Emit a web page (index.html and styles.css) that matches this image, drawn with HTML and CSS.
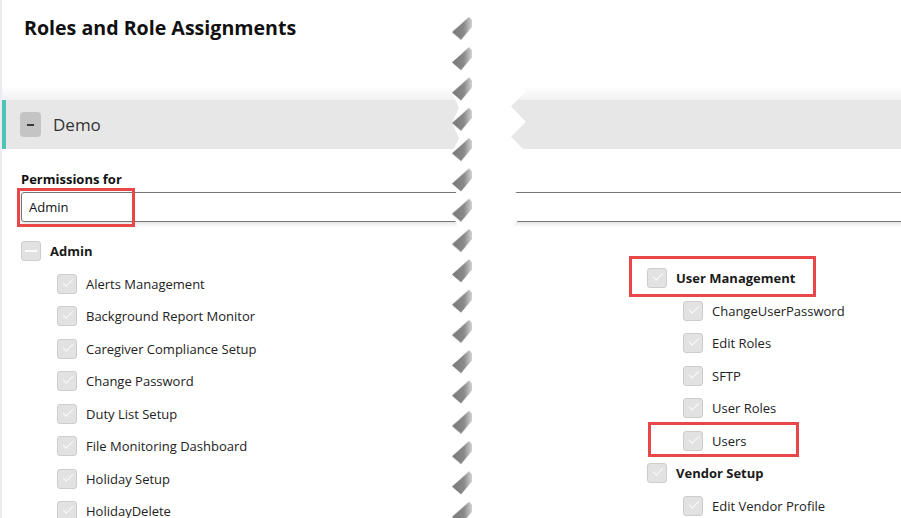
FILE: index.html
```html
<!DOCTYPE html>
<html lang="en">
<head>
    <meta charset="UTF-8">
    <meta name="viewport" content="width=device-width, initial-scale=1.0">
    <title>Roles and Role Assignments</title>
    <link rel="stylesheet" href="styles.css">
</head>
<body>
<div class="stage">

    <!-- left half of the torn capture -->
    <div class="tear-left">
        <div class="piece piece-left">
            <header class="page-head">
                <h1>Roles and Role Assignments</h1>
            </header>
            <div class="head-shade"></div>

            <div class="group-band">
                <span class="collapse-btn" aria-label="Collapse"></span>
                <span class="group-name">Demo</span>
            </div>

            <div class="perm-select">
                <label class="perm-label">Permissions for</label>
                <div class="select-box">Admin</div>
                <span class="mark mark-select"></span>
            </div>

            <ul class="perm-tree">
                <li class="perm-row"><span class="tick tick-partial"></span><b>Admin</b></li>
                <li class="perm-row child"><span class="tick"></span>Alerts Management</li>
                <li class="perm-row child"><span class="tick"></span>Background Report Monitor</li>
                <li class="perm-row child"><span class="tick"></span>Caregiver Compliance Setup</li>
                <li class="perm-row child"><span class="tick"></span>Change Password</li>
                <li class="perm-row child"><span class="tick"></span>Duty List Setup</li>
                <li class="perm-row child"><span class="tick"></span>File Monitoring Dashboard</li>
                <li class="perm-row child"><span class="tick"></span>Holiday Setup</li>
                <li class="perm-row child"><span class="tick"></span>HolidayDelete</li>
            </ul>
        </div>

        <!-- shadow teeth along the torn edge -->
        <svg class="tear-teeth" width="26" height="518" viewBox="0 0 26 518" aria-hidden="true">
            <defs>
                <linearGradient id="toothFade" x1="0" y1="0" x2="1" y2="0">
                    <stop offset="0" stop-color="#777"/>
                    <stop offset="0.6" stop-color="#8a8a8a"/>
                    <stop offset="1" stop-color="#d2d2d2"/>
                </linearGradient>
                <pattern id="teeth" patternUnits="userSpaceOnUse" x="0" y="15" width="26" height="30.3">
                    <polygon points="2,17 19,2 22,5 22,12 11,25" fill="url(#toothFade)"/>
                </pattern>
                <filter id="soft" x="-20%" y="-5%" width="140%" height="110%">
                    <feGaussianBlur stdDeviation="0.6"/>
                </filter>
            </defs>
            <rect x="0" y="14" width="26" height="504" fill="url(#teeth)" filter="url(#soft)"/>
        </svg>
    </div>

    <!-- right half of the torn capture -->
    <div class="piece piece-right">
        <div class="page-head"></div>
        <div class="head-shade"></div>
        <div class="group-band"></div>

        <div class="perm-select perm-select-cont">
            <div class="select-box"></div>
        </div>

        <ul class="perm-tree perm-tree-cont">
            <li class="perm-row mark-um"><span class="tick"></span><b>User Management</b></li>
            <li class="perm-row child"><span class="tick"></span>ChangeUserPassword</li>
            <li class="perm-row child"><span class="tick"></span>Edit Roles</li>
            <li class="perm-row child"><span class="tick"></span>SFTP</li>
            <li class="perm-row child"><span class="tick"></span>User Roles</li>
            <li class="perm-row child mark-users"><span class="tick"></span>Users</li>
            <li class="perm-row"><span class="tick"></span><b>Vendor Setup</b></li>
            <li class="perm-row child"><span class="tick"></span>Edit Vendor Profile</li>
        </ul>
    </div>

</div>
</body>
</html>
```

FILE: styles.css
```css
/* Page reset */
html, body {
    margin: 0;
    padding: 0;
    background: #fff;
}

body {
    font-family: "Open Sans", "Noto Sans", sans-serif;
    color: #222;
    width: 901px;
    height: 518px;
    overflow: hidden;
}

.stage {
    display: flex;
    height: 518px;
}

/* Torn pieces */
.tear-left {
    position: relative;
    flex: none;
    width: 474px;
    height: 518px;
}

.piece {
    height: 518px;
    overflow: hidden;
    background: #fff;
}

.piece-left {
    width: 459px;
    border-left: 2px solid #ebebf1;
    box-sizing: border-box;
    clip-path: polygon(0 0, 459px 0, 452px 1.7px, 459px 16.85px, 452px 32px, 459px 47.15px, 452px 62.3px, 459px 77.45px, 452px 92.6px, 459px 107.75px, 452px 122.9px, 459px 138.05px, 452px 153.2px, 459px 168.35px, 452px 183.5px, 459px 198.65px, 452px 213.8px, 459px 228.95px, 452px 244.1px, 459px 259.25px, 452px 274.4px, 459px 289.55px, 452px 304.7px, 459px 319.85px, 452px 335px, 459px 350.15px, 452px 365.3px, 459px 380.45px, 452px 395.6px, 459px 410.75px, 452px 425.9px, 459px 441.05px, 452px 456.2px, 459px 471.35px, 452px 486.5px, 459px 501.65px, 452px 516.8px, 459px 531.95px, 0 531.95px);
}

.tear-teeth {
    position: absolute;
    top: 0;
    left: 450px;
    display: block;
}

.piece-right {
    flex: none;
    width: 390px;
    margin-left: 37px;
    clip-path: polygon(15px 0, 100% 0, 100% 100%, 0 530.7px, 15px 515.55px, 0 500.4px, 15px 485.25px, 0 470.1px, 15px 454.95px, 0 439.8px, 15px 424.65px, 0 409.5px, 15px 394.35px, 0 379.2px, 15px 364.05px, 0 348.9px, 15px 333.75px, 0 318.6px, 15px 303.45px, 0 288.3px, 15px 273.15px, 0 258px, 15px 242.85px, 0 227.7px, 15px 212.55px, 0 197.4px, 15px 182.25px, 0 167.1px, 15px 151.95px, 0 136.8px, 15px 121.65px, 0 106.5px, 15px 91.35px, 0 76.2px, 15px 61.05px, 0 45.9px, 15px 30.75px, 0 15.6px, 15px 0.45px);
}

/* Page header */
.page-head {
    height: 86px;
    box-sizing: border-box;
    padding: 14px 0 0 22px;
}

.page-head h1 {
    margin: 0;
    font-size: 19.6px;
    line-height: 27px;
    font-weight: 700;
    color: #111;
}

.head-shade {
    height: 14px;
    background: linear-gradient(#fff, #f1f1f4);
}

/* Role group band */
.group-band {
    height: 49px;
    background: #e7e7e7;
    display: flex;
    align-items: center;
    padding-left: 18px;
}

.piece-left .group-band {
    border-left: 6px solid #4ec3b6;
    padding-left: 14px;
    margin-left: -2px;
}

.collapse-btn {
    width: 21px;
    height: 25px;
    border-radius: 4px;
    background: #c4c4c4;
    display: flex;
    align-items: center;
    justify-content: center;
}

.collapse-btn::before {
    content: "";
    width: 7px;
    height: 2px;
    background: #3a3a3a;
}

.group-name {
    margin-left: 12px;
    font-size: 17px;
    color: #333;
}

/* Permissions-for select */
.perm-select {
    position: relative;
    padding: 21px 0 0 19px;
}

.perm-label {
    display: block;
    font-size: 13px;
    line-height: 18px;
    font-weight: 700;
    color: #111;
}

.select-box {
    margin-top: 4px;
    margin-right: -10px;
    height: 30px;
    box-sizing: border-box;
    border: 1px solid #767676;
    border-radius: 3px;
    box-shadow: 0 2px 4px rgba(0, 0, 0, 0.12);
    padding-left: 7px;
    font-size: 13px;
    line-height: 28px;
    color: #111;
}

.perm-select-cont {
    padding: 39px 0 0 0;
}

.perm-select-cont .select-box {
    margin-left: -10px;
}

/* Red annotation boxes */
.mark-select,
.mark-um::after,
.mark-users::after {
    content: "";
    position: absolute;
    border: 3px solid #e8474a;
    box-sizing: border-box;
    pointer-events: none;
}

.mark-select {
    left: 15px;
    top: 39px;
    width: 118px;
    height: 39px;
}

/* Permission tree */
.perm-tree {
    list-style: none;
    margin: 12.75px 0 0;
    padding: 0 0 0 19px;
}

.perm-tree-cont {
    margin-top: 39.75px;
    padding-left: 136px;
}

.perm-row {
    position: relative;
    height: 32.5px;
    display: flex;
    align-items: center;
    gap: 9px;
    font-size: 13px;
    color: #222;
    white-space: nowrap;
}

.perm-row b {
    font-weight: 700;
    color: #1a1a1a;
}

.perm-row.child {
    padding-left: 36px;
}

.mark-um::after {
    left: -18px;
    top: -6px;
    width: 187px;
    height: 41px;
}

.mark-users::after {
    left: 1px;
    top: -2px;
    width: 151px;
    height: 35px;
}

/* Check boxes (disabled / checked) */
.tick {
    position: relative;
    flex: none;
    width: 20px;
    height: 20px;
    box-sizing: border-box;
    border: 1px solid #cdcdcd;
    border-radius: 3px;
    background: #e2e2e2;
}

.tick::after {
    content: "";
    position: absolute;
    left: 5px;
    top: 4px;
    width: 9px;
    height: 4px;
    border-left: 1.5px solid #fafafa;
    border-bottom: 1.5px solid #fafafa;
    transform: rotate(-45deg);
}

.tick-partial::after {
    left: 3px;
    top: 8px;
    width: 12px;
    height: 2px;
    border: none;
    background: #fafafa;
    transform: none;
}
```
